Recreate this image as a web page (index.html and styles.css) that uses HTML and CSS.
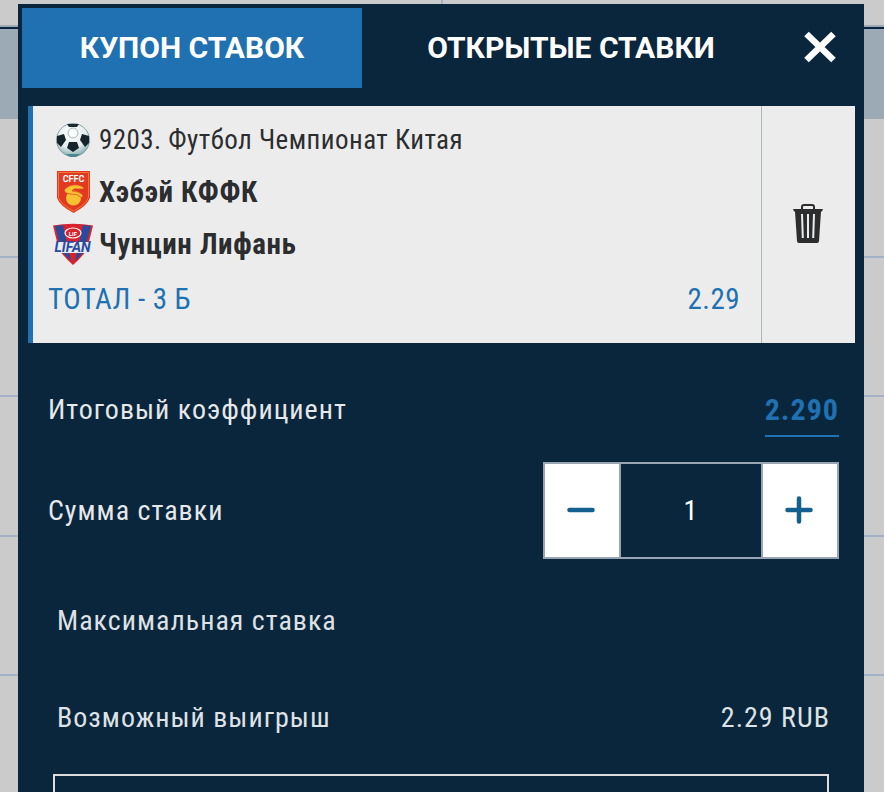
FILE: index.html
```html
<!DOCTYPE html>
<html lang="ru">
<head>
<meta charset="utf-8">
<title>Купон ставок</title>
<link rel="stylesheet" href="styles.css">
</head>
<body>
<div class="panel">
  <header class="tabs">
    <div class="tab tab-active">КУПОН СТАВОК</div>
    <div class="tab">ОТКРЫТЫЕ СТАВКИ</div>
    <div class="close">
      <svg width="34" height="32" viewBox="0 0 34 32"><path d="M3.5 3 L30.5 29 M30.5 3 L3.5 29" stroke="#fff" stroke-width="6.5" fill="none"/></svg>
    </div>
  </header>

  <section class="card">
    <div class="card-main">
      <div class="match-row league">
        <span class="crest">
          <svg width="37" height="36" viewBox="0 0 37 36">
            <defs><radialGradient id="ball" cx="45%" cy="30%" r="75%"><stop offset="0" stop-color="#fff"/><stop offset="0.6" stop-color="#e4ecec"/><stop offset="1" stop-color="#6f9fa6"/></radialGradient></defs>
            <circle cx="18" cy="18" r="16.5" fill="url(#ball)" stroke="#6f8f96" stroke-width="0.8"/>
            <path d="M12 2 L24 2 L22 5 L14 5Z" fill="#1c2a30"/>
            <path d="M2 14 L9 12 L11 18 L6 25 L2 21Z" fill="#16242b"/>
            <path d="M34 14 L27 12 L25 18 L30 25 L34 21Z" fill="#16242b"/>
            <path d="M14 20 L22 20 L24 26 L18 30 L12 26Z" fill="#16242b"/>
            <path d="M11 32 L25 32 L21 35 L15 35Z" fill="#4f858f"/>
            <circle cx="18" cy="11" r="5" fill="none" stroke="#aab8ba" stroke-width="1"/>
          </svg>
        </span>
        <span>9203. Футбол Чемпионат Китая</span>
      </div>
      <div class="match-row team">
        <span class="crest">
          <svg width="33" height="42" viewBox="0 0 33 42">
            <path d="M0 0 H33 V27 Q30 35 16.500 42 Q3 35 0 27Z" fill="#e23a22"/>
            <path d="M1.500 1.500 H31.500 V26.500 Q28.500 34 16.500 40 Q4.500 34 1.500 26.500Z" fill="none" stroke="#f08a3a" stroke-width="0.8"/>
            <text x="16.500" y="10.500" class="crest-cffc">CFFC</text>
            <circle cx="16.500" cy="27" r="7.500" fill="#f6c232"/>
            <path d="M7 19 Q12 13 21 14 Q27 15 27 18 L21 18 Q16 17 15 20 Q22 20 26 24 L25 27 Q20 22 13 23 Q8 23 7 19Z" fill="#f6c232" stroke="#e23a22" stroke-width="0.7"/>
          </svg>
        </span>
        <span>Хэбэй КФФК</span>
      </div>
      <div class="match-row team">
        <span class="crest">
          <svg width="42" height="42" viewBox="0 0 42 42">
            <path d="M1 2.500 Q21 -1 41 2.500 L35 27 Q28 36 21 42 Q14 36 7 27Z" fill="#d8232e"/>
            <path d="M3 3 L11 2 L19 38 L10 29Z M39 3 L31 2 L23 38 L32 29Z" fill="#2a4a9c"/>
            <ellipse cx="21" cy="10" rx="8" ry="5" fill="none" stroke="#fff" stroke-width="1.200"/>
            <text x="21" y="12.500" class="crest-small">LIF</text>
            <path d="M3 19 H42 L39 30 H0Z" fill="#e8ecf6"/>
            <text x="20.500" y="29" class="crest-lifan">LIFAN</text>
          </svg>
        </span>
        <span>Чунцин Лифань</span>
      </div>
      <div class="bet-row">
        <span>ТОТАЛ - 3 Б</span>
        <span>2.29</span>
      </div>
    </div>
    <div class="card-delete">
      <svg width="30" height="40" viewBox="0 0 30 40">
        <path d="M9 5 V3 Q9 1 11 1 H19 Q21 1 21 3 V5" fill="none" stroke="#2b2d2f" stroke-width="2"/>
        <path d="M0 5 H30 L29 7.500 H28 L26 37 Q26 39 24 39 H6 Q4 39 4 37 L2 7.500 H1Z" fill="#2b2d2f"/>
        <path d="M9 10 L9.800 34 M15 10 V34 M21 10 L20.200 34" stroke="#ececec" stroke-width="2" fill="none"/>
      </svg>
    </div>
  </section>

  <div class="row row-total">
    <span class="total-label">Итоговый коэффициент</span>
    <span class="total-value">2.290</span>
  </div>

  <div class="row row-stake">
    <span>Сумма ставки</span>
    <div class="stepper">
      <div class="step">
        <svg width="30" height="30" viewBox="0 0 30 30"><path d="M3.500 15 H26.500" stroke="#14608f" stroke-width="4.500" stroke-linecap="round"/></svg>
      </div>
      <div class="amount">1</div>
      <div class="step">
        <svg width="30" height="30" viewBox="0 0 30 30"><path d="M3.500 15 H26.500 M15 3.500 V26.500" stroke="#14608f" stroke-width="4.500" stroke-linecap="round"/></svg>
      </div>
    </div>
  </div>

  <div class="info info-max"><span>Максимальная ставка</span></div>
  <div class="info info-win"><span>Возможный выигрыш</span><span>2.29 RUB</span></div>
  <div class="submit"></div>
</div>
</body>
</html>
```

FILE: styles.css
```css
html, body {
  margin: 0;
  height: 792px;
  overflow: hidden;
}

body {
  box-sizing: border-box;
  padding: 4px 20px 0 18px;
  font-family: Roboto, "Noto Sans", sans-serif;
  font-stretch: 85%;
  background-color: #cbcbcb;
  background-image:
    linear-gradient(#9caab6, #9caab6),
    linear-gradient(#0a2540, #0a2540),
    linear-gradient(#9caab6, #9caab6),
    linear-gradient(#a3b2c6, #a3b2c6),
    linear-gradient(#a3b2c6, #a3b2c6),
    linear-gradient(#a3b2c6, #a3b2c6),
    linear-gradient(#a3b2c6, #a3b2c6),
    linear-gradient(#a3b2c6, #a3b2c6);
  background-repeat: no-repeat;
  background-size: 100% 2px, 100% 2px, 100% 90px, 100% 2px, 100% 2px, 100% 2px, 100% 2px, 2px 4px;
  background-position: 0 25px, 0 27px, 0 29px, 0 256px, 0 395px, 0 535px, 0 674px, 441px 0;
}

.panel {
  height: 788px;
  background: #0a263d;
  overflow: hidden;
}

.tabs {
  display: flex;
  height: 80px;
  padding: 4px 4px 0;
  color: #fff;
}

.tab {
  flex: 1;
  display: flex;
  align-items: center;
  justify-content: center;
  box-sizing: border-box;
  padding-bottom: 2px;
  font-size: 30px;
  font-weight: 700;
  font-stretch: 100%;
  white-space: nowrap;
}

.tab-active {
  flex: 0 0 340px;
  background: #2071b1;
}

.close {
  flex: 0 0 80px;
  display: flex;
  align-items: center;
  justify-content: center;
  padding-bottom: 2px;
}

.card {
  display: flex;
  height: 237px;
  margin: 18px 9px 0 10px;
  background: #ececec;
  border-left: 5px solid #2071b1;
}

.card-main {
  flex: 1;
  padding: 8px 21px 0 15px;
  color: #2b2d2f;
}

.match-row {
  display: flex;
  align-items: center;
  height: 52px;
}

.crest {
  flex: 0 0 50px;
  display: flex;
  justify-content: center;
  margin-right: 1px;
}

.crest svg {
  display: block;
}

.crest svg text {
  font-stretch: 100%;
  letter-spacing: 0;
}

.crest-cffc {
  font-size: 9px;
  font-weight: 700;
  fill: #fff;
  text-anchor: middle;
}

.crest-small {
  font-size: 6px;
  font-weight: 700;
  fill: #fff;
  text-anchor: middle;
}

.crest-lifan {
  font-size: 14px;
  font-weight: 700;
  font-style: italic;
  fill: #2b4a9e;
  text-anchor: middle;
}

.league {
  font-size: 27px;
  letter-spacing: 0.45px;
}

.team {
  font-size: 29px;
  font-weight: 700;
  letter-spacing: 0.6px;
}

.bet-row {
  display: flex;
  justify-content: space-between;
  align-items: center;
  height: 52px;
  margin-top: 3px;
  font-size: 29px;
  letter-spacing: 0.45px;
  color: #2071b1;
}

.card-delete {
  flex: 0 0 94px;
  display: flex;
  align-items: center;
  justify-content: center;
  border-left: 1px solid #b0b5ba;
  box-sizing: border-box;
}

.card-delete svg {
  margin: 0 2px 2px 0;
}

.row {
  display: flex;
  justify-content: space-between;
  align-items: center;
  margin: 0 25px 0 30px;
  font-size: 28px;
  letter-spacing: 1px;
  color: #e6e8ea;
}

.row-total {
  height: 57px;
  margin-top: 37px;
}

.total-label {
  padding-top: 2px;
}

.total-value {
  display: block;
  height: 57px;
  line-height: 59px;
  box-sizing: border-box;
  border-bottom: 2px solid #2071b1;
  font-size: 30px;
  font-weight: 700;
  letter-spacing: 1px;
  color: #2071b1;
}

.row-stake {
  margin-top: 25px;
  height: 97px;
}

.stepper {
  display: flex;
  gap: 2px;
  box-sizing: border-box;
  width: 296px;
  height: 97px;
  padding: 2px;
  background: #97a5b3;
}

.step {
  flex: 0 0 74px;
  display: flex;
  align-items: center;
  justify-content: center;
  background: #fff;
}

.step svg {
  margin: 0 2px 2px 0;
}

.amount {
  flex: 1;
  display: flex;
  align-items: center;
  justify-content: center;
  background: #0a263d;
  color: #fff;
}

.info {
  display: flex;
  justify-content: space-between;
  align-items: center;
  height: 40px;
  margin: 0 34px 0 39px;
  font-size: 28px;
  letter-spacing: 1px;
  color: #dfe2e5;
}

.info-max {
  margin-top: 41px;
}

.info-win {
  margin-top: 57px;
}

.submit {
  height: 40px;
  margin: 37px 35px 0;
  border: 2px solid #dcdcdc;
}
```
